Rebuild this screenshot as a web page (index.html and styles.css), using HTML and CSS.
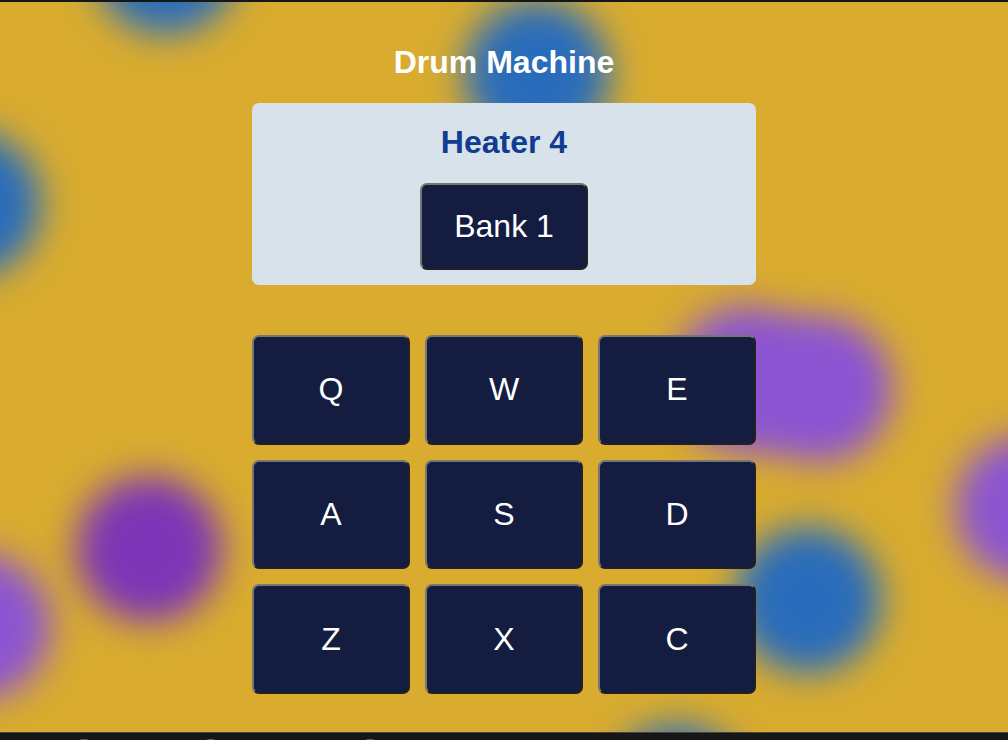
FILE: index.html
```html
<!DOCTYPE html>
<html lang="en">
<head>
    <meta charset="UTF-8">
    <meta name="viewport" content="width=device-width, initial-scale=1.0">
    <title>Drum Machine</title>
    <link rel="stylesheet" href="styles.css">
</head>
<body>
    <div class="top-bar"></div>

    <main class="stage">
        <!-- Blurred dots behind the machine -->
        <div class="dots" aria-hidden="true">
            <span class="dot blue dot-1"></span>
            <span class="dot blue dot-2"></span>
            <span class="dot blue dot-3"></span>
            <span class="dot blue dot-4"></span>
            <span class="dot blue dot-5"></span>
            <span class="dot violet dot-6"></span>
            <span class="dot violet dot-7"></span>
            <span class="dot violet dot-8"></span>
            <span class="dot violet dot-9"></span>
            <span class="dot purple dot-10"></span>
        </div>

        <div class="container" id="drum-machine">
            <h1 class="title">Drum Machine</h1>

            <div class="display">
                <h2 class="sound-name" id="display">Heater 4</h2>
                <button type="button" class="btn bank-btn">Bank 1</button>
            </div>

            <div class="pads">
                <button type="button" class="btn drum-pad">Q</button>
                <button type="button" class="btn drum-pad">W</button>
                <button type="button" class="btn drum-pad">E</button>
                <button type="button" class="btn drum-pad">A</button>
                <button type="button" class="btn drum-pad">S</button>
                <button type="button" class="btn drum-pad">D</button>
                <button type="button" class="btn drum-pad">Z</button>
                <button type="button" class="btn drum-pad">X</button>
                <button type="button" class="btn drum-pad">C</button>
            </div>
        </div>
    </main>

    <footer class="bottom-bar">
        <svg class="bar-marks" width="400" height="7" viewBox="0 0 400 7" aria-hidden="true">
            <ellipse cx="84" cy="7" rx="4" ry="1"/>
            <ellipse cx="211" cy="7" rx="4" ry="1"/>
            <ellipse cx="370" cy="7" rx="4" ry="1"/>
        </svg>
    </footer>
</body>
</html>
```
FILE: styles.css
```css
* {
    box-sizing: border-box;
}

body {
    font-family: "Liberation Sans", Arial, sans-serif;
    margin: 0;
    min-height: 100vh;
    display: flex;
    flex-direction: column;
    background: #d9ac2f;
    color: #fff;
}

.top-bar {
    height: 2px;
    background: #161616;
}

.stage {
    flex: 1;
    position: relative;
    overflow: hidden;
    padding: 42px 0 36px;
}

.container {
    position: relative;
    width: 50%;
    margin: 0 auto;
    text-align: center;
}

.title,
.sound-name {
    margin: 0 0 22px;
    font-size: 32px;
    line-height: 37px;
}

.display {
    padding: 21px 15px 15px;
    background: #d8e2eb;
    border-radius: 7px;
}

.sound-name {
    color: #103d91;
}

.btn {
    font-family: inherit;
    font-size: 32px;
    line-height: 37px;
    color: #fff;
    background: #141c3f;
    border: 2px solid;
    border-color: #767676 #212121 #212121 #767676;
    border-radius: 7px;
    cursor: pointer;
}

.bank-btn {
    display: block;
    margin: 0 auto;
    padding: 23px 32px;
}

.pads {
    display: grid;
    grid-template-columns: repeat(3, 1fr);
    grid-template-rows: repeat(3, 1fr);
    gap: 15px;
    min-height: 359px;
    margin-top: 50px;
}

.drum-pad {
    padding: 0;
}

/* Background dots */
.dots {
    position: absolute;
    inset: 0;
}

.dot {
    position: absolute;
    width: 146px;
    height: 146px;
    border-radius: 50%;
    filter: blur(18px);
}

.blue {
    background: #286cbb;
}

.violet {
    background: #8b54d2;
}

.purple {
    background: #7c35b6;
}

.dot-1 { left: 93px; top: -114px; }
.dot-2 { left: 464px; top: -1px; }
.dot-3 { left: -105px; top: 129px; }
.dot-4 { left: 735px; top: 525px; }
.dot-5 { left: 604px; top: 723px; }
.dot-6 { left: 673px; top: 304px; }
.dot-7 { left: 747px; top: 314px; }
.dot-8 { left: 955px; top: 433px; }
.dot-9 { left: -95px; top: 551px; }
.dot-10 { left: 76px; top: 474px; }

.bottom-bar {
    height: 8px;
    background: #161616;
    border-top: 1px solid #444;
}

.bar-marks {
    display: block;
    fill: #666;
}
```
